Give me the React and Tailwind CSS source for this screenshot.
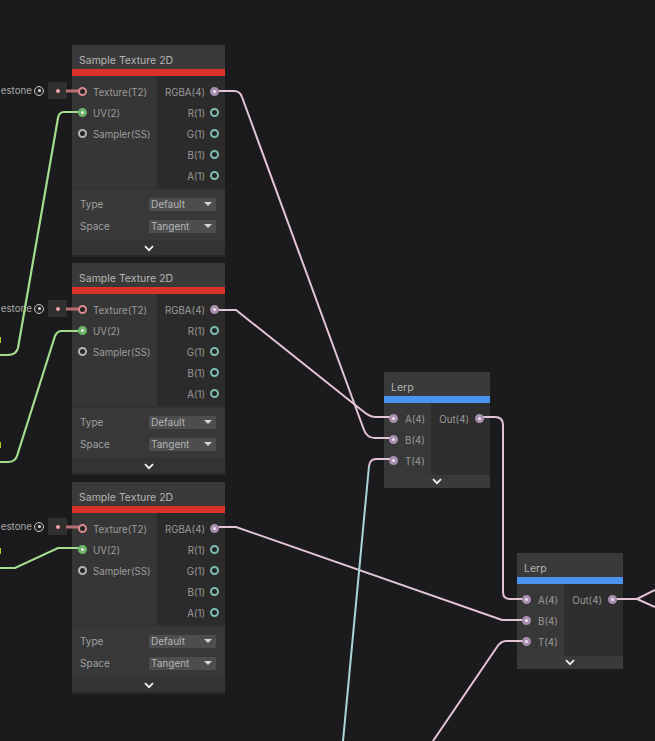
const font = { fontFamily: "Inter" }

const Chevron = () => (
  <svg width="10" height="7" viewBox="0 0 10 7" fill="none">
    <path d="M1 1.2 L5 5.2 L9 1.2" stroke="#eeeeee" strokeWidth="1.8" />
  </svg>
)

// port dot sits above the wires, a bit higher than its label like in the graph view
const Dot = ({ color, core }) => (
  <span
    className="relative top-[-2px] z-10 flex h-[9px] w-[9px] shrink-0 items-center justify-center rounded-full border-[2px]"
    style={{ borderColor: color, backgroundColor: core ? color : "#242424" }}
  >
    {core && <span className="h-[3px] w-[3px] rounded-full bg-[#f2e6ee]" />}
  </span>
)

const Select = ({ value }) => (
  <div className="flex h-[13px] w-[67px] items-center justify-between bg-[#4d4d4d] pl-[2px] pr-[3px] text-[10px] leading-none text-[#b5b5b5]">
    <span>{value}</span>
    <span className="mr-[1px] h-0 w-0 border-x-[4px] border-t-[4px] border-x-transparent border-t-[#d5d5d5]" />
  </div>
)

const inputs = [
  { label: "Texture(T2)", color: "#d98a8f", core: false },
  { label: "UV(2)", color: "#6db568", core: true },
  { label: "Sampler(SS)", color: "#b5b5b5", core: false },
]
const outputs = ["R(1)", "G(1)", "B(1)", "A(1)"]

const SampleNode = ({ top }) => (
  <div className={`absolute left-[72px] flex w-[153px] flex-col bg-[#333333] ${top}`}>
    <div className="flex h-[24px] items-center bg-[#3a3a3a] pl-[7px] pt-[8px] text-[10.5px] text-[#b5b5b5]">Sample Texture 2D</div>
    <div className="h-[7px] bg-[#d8322a]" />
    <div className="flex h-[112px]">
      <div className="flex w-[84px] flex-col gap-[8px] bg-[#363636] pt-[11px] text-[9.75px] text-[#9c9c9c]">
        {inputs.map((p) => (
          <div key={p.label} className="flex h-[13px] items-center gap-[6px] pl-[6px]">
            <Dot color={p.color} core={p.core} />
            <span>{p.label}</span>
          </div>
        ))}
      </div>
      <div className="ml-[1px] flex flex-1 flex-col gap-[8px] bg-[#2b2b2b] pt-[11px] text-[9.75px] text-[#9c9c9c]">
        <div className="flex h-[13px] items-center justify-end gap-[5px] pr-[6px]">
          <span>RGBA(4)</span>
          <Dot color="#a88fb0" core />
        </div>
        {outputs.map((label) => (
          <div key={label} className="flex h-[13px] items-center justify-end gap-[5px] pr-[6px]">
            <span>{label}</span>
            <Dot color="#7fbdb4" />
          </div>
        ))}
      </div>
    </div>
    <div className="mt-[2px] flex h-[50px] flex-col justify-center gap-[9px] bg-[#383838] pl-[8px] pr-[9px] text-[10px] leading-none text-[#a0a0a0]">
      <div className="flex items-center justify-between"><span>Type</span><Select value="Default" /></div>
      <div className="flex items-center justify-between"><span>Space</span><Select value="Tangent" /></div>
    </div>
    <div className="mt-[2px] flex h-[13px] items-center justify-center bg-[#333333]"><Chevron /></div>
    <div className="h-[2px] bg-[#282828]" />
  </div>
)

const LerpNode = ({ pos }) => (
  <div className={`absolute flex w-[106px] flex-col bg-[#333333] ${pos}`}>
    <div className="flex h-[24px] items-center bg-[#3a3a3a] pl-[7px] pt-[8px] text-[10.5px] text-[#b0b0b0]">Lerp</div>
    <div className="h-[7px] bg-[#4a94f0]" />
    <div className="flex h-[72px]">
      <div className="flex w-[47px] flex-col gap-[8px] bg-[#383838] pt-[11px] text-[9.75px] text-[#9c9c9c]">
        {["A(4)", "B(4)", "T(4)"].map((label) => (
          <div key={label} className="flex h-[13px] items-center gap-[7px] pl-[5px]">
            <Dot color="#a88fb0" core />
            <span>{label}</span>
          </div>
        ))}
      </div>
      <div className="flex flex-1 justify-end bg-[#2e2e2e] pt-[11px] text-[9.75px] text-[#9c9c9c]">
        <div className="flex h-[13px] items-center gap-[6px] pr-[6px]">
          <span>Out(4)</span>
          <Dot color="#a88fb0" core />
        </div>
      </div>
    </div>
    <div className="flex h-[13px] items-center justify-center bg-[#3a3a3a]"><Chevron /></div>
  </div>
)

const Property = ({ top }) => (
  <div className={`absolute left-0 flex h-[17px] items-center ${top}`}>
    <div className="flex h-full w-[46px] items-center justify-end gap-[2px] pr-[2px] text-[9.75px] text-[#a8a8a8]">
      <span className="whitespace-nowrap pt-[1px]">estone</span>
      <span className="flex h-[10px] w-[10px] shrink-0 items-center justify-center rounded-full border border-[#c8c8c8] bg-[#262626]">
        <span className="h-[3px] w-[3px] rounded-full bg-[#d5d5d5]" />
      </span>
    </div>
    <div className="ml-[2px] flex h-full w-[19px] items-center justify-center bg-[#303030]">
      <span className="h-[4px] w-[4px] rounded-full bg-[#f0a0a8]" />
    </div>
  </div>
)

const Wires = () => (
  <svg className="absolute left-0 top-0 z-[5]" width="655" height="741" fill="none" strokeWidth="2">
    <g stroke="#a3dd8e" strokeWidth="2.2">
      <path d="M82 112 H64 Q59 112 58 118 L18 348 Q16 355 8 355 H0" />
      <path d="M82 331 H62 Q57 331 55 336 L17 456 Q15 462 8 462 H0" />
      <path d="M82 548 H58 L15 568 H0" />
    </g>
    <g stroke="#a8cc20">
      <path d="M0 337 V343" />
      <path d="M0 442 V448" />
      <path d="M0 548 V554" />
    </g>
    <g stroke="#b86f74" strokeWidth="3">
      <path d="M66 91 H82" />
      <path d="M66 309 H82" />
      <path d="M66 527 H82" />
    </g>
    <g stroke="#e3c4d4">
      <path d="M214 91 H234 Q240 91 242 97 L364 430 Q367 438 375 438 H393" />
      <path d="M214 310 H236 L364 412 Q370 417 376 417 H393" />
      <path d="M214 527 H236 L502 620 H527" />
      <path d="M478 417 H495 Q503 417 503 425 V592 Q503 599 510 599 H527" />
      <path d="M527 641 H506 Q501 641 497 647 L433 741" />
      <path d="M612 599 H637 L655 590" />
      <path d="M637 599 L655 607" />
      <path d="M393 459 H376 Q370 459 369 466" />
    </g>
    <path d="M369 466 L343 741" stroke="#a8d6d8" />
  </svg>
)

export default function App() {
  return (
    <div className="relative h-[741px] w-[655px] overflow-hidden bg-[#1b1b1d]" style={font}>
      <Property top="top-[82px]" />
      <Property top="top-[300px]" />
      <Property top="top-[518px]" />
      <SampleNode top="top-[45px]" />
      <SampleNode top="top-[263px]" />
      <SampleNode top="top-[482px]" />
      <LerpNode pos="left-[384px] top-[372px]" />
      <LerpNode pos="left-[517px] top-[553px]" />
      <Wires />
    </div>
  )
}
